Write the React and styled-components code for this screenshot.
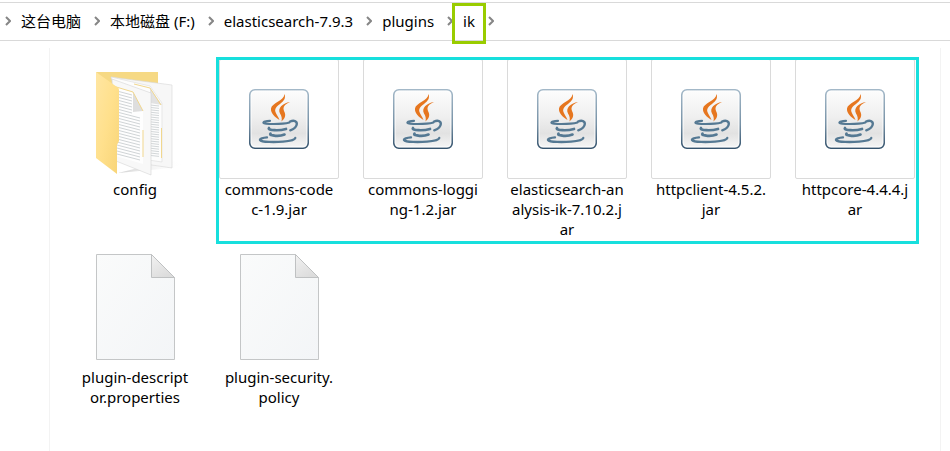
import React from "react";
import styled, { createGlobalStyle } from "styled-components";

const GlobalStyle = createGlobalStyle`
  * { box-sizing: border-box; }
  body {
    margin: 0;
    background: #fff;
    color: #000;
    font-family: "Noto Sans", "Noto Sans CJK SC", sans-serif;
    font-size: 15px;
  }
  button {
    font: inherit;
    color: inherit;
    background: none;
    border: 0;
    padding: 0;
    cursor: default;
  }
`;

const Explorer = styled.div`
  display: flex;
  flex-direction: column;
  min-height: 100vh;
  padding-top: 2px;
`;

const AddressBar = styled.nav`
  height: 39px;
  border-top: 1px solid #d9d9d9;
  border-bottom: 1px solid #d9d9d9;
`;

const Crumbs = styled.ol`
  list-style: none;
  display: flex;
  align-items: center;
  gap: 13px;
  height: 100%;
  margin: 0;
  padding: 0 5px 2px;
`;

const Crumb = styled.li`
  display: flex;
  align-items: center;
  gap: 10px;
`;

const CrumbButton = styled.button`
  position: relative;
  line-height: 20px;
  white-space: nowrap;
`;

const CrumbMark = styled.span`
  position: absolute;
  inset: -8px -11px -13px -11px;
  border: 3px solid #99cc00;
`;

const Arrow = styled.svg`
  display: block;
  width: 6px;
  height: 10px;
  fill: none;
  stroke: #868686;
  stroke-width: 2;
`;

const Pane = styled.main`
  flex: 1;
  margin: 7px 9px 0 49px;
  padding: 11px 0 0 25px;
  border: solid #f3f3f3;
  border-width: 0 1px;
`;

const Files = styled.ul`
  position: relative;
  list-style: none;
  display: grid;
  grid-template-columns: repeat(auto-fill, 120px);
  gap: 8px 24px;
  margin: 0;
  padding: 0;
`;

const Selection = styled.li`
  position: absolute;
  grid-area: 1 / 2 / 2 / 7;
  inset: -2px -4px -5px -3px;
  border: 3px solid #17dfdd;
  pointer-events: none;
`;

const FileButton = styled.button`
  display: block;
  width: 100%;
`;

const Thumb = styled.span`
  display: flex;
  align-items: center;
  justify-content: center;
  height: 120px;
  border: 1px solid ${(p) => (p.$framed ? "#dadada" : "transparent")};
  border-radius: 2px;
`;

const Drawing = styled.svg`
  display: block;
  overflow: visible;
`;

const FileName = styled.span`
  display: block;
  line-height: 20px;
  white-space: pre;
  text-align: center;
`;

const Chevron = () => (
  <Arrow viewBox="0 0 6 10" aria-hidden="true">
    <path d="M1 1l4 4-4 4" />
  </Arrow>
);

const JavaIcon = () => (
  <Drawing width="60" height="60" viewBox="0 0 60 60" aria-hidden="true">
    <defs>
      <linearGradient id="tile" x1="0" y1="0" x2="0" y2="1">
        <stop offset="0" stopColor="#fdfdfd" />
        <stop offset="0.45" stopColor="#f0f0f0" />
        <stop offset="0.75" stopColor="#e2e2e2" />
        <stop offset="1" stopColor="#f6f6f6" />
      </linearGradient>
      <linearGradient id="tileEdge" x1="0" y1="0" x2="0" y2="1">
        <stop offset="0" stopColor="#a3b8c8" />
        <stop offset="0.6" stopColor="#7590a5" />
        <stop offset="1" stopColor="#35536d" />
      </linearGradient>
    </defs>
    <rect x="0.8" y="0.8" width="58.4" height="58.4" rx="5" fill="url(#tile)" stroke="url(#tileEdge)" strokeWidth="1.6" />
    <rect x="2.2" y="2.2" width="55.6" height="55.6" rx="4" fill="none" stroke="#fff" strokeOpacity="0.7" />
    <g fill="#e6761f">
      <path d="M35.500 5c1.500 4-.5 7-4.500 10-4 3-5.500 5-4.500 8 .7 2.500 3 4.500 4 8-5-3-9-7-8.500-11.500C22.500 14 35 12 35.500 5z" />
      <path d="M41 13c-4.500 2-6.500 4-6.500 6.500 0 3 2.500 4.500 1.500 8-.5 2-2 3.500-3.500 5 .8-3.500 0-5.500-1.500-8-3-5.500 3-10.500 10-11.500z" />
    </g>
    <g fill="none" stroke="#557993" strokeLinecap="round">
      <path d="M21 31.800c-4 .3-7 1.200-6.500 2 1 1.500 18 1.800 26-.3" strokeWidth="2.200" />
      <path d="M41 32.500c4-1.500 7-.5 6.800 2.500-.2 2.800-3 5-6.500 6.300" strokeWidth="2.400" />
      <path d="M20 39c-1 1.300 1.500 2 5.500 2.200 4 .2 8-.2 11.500-1.200" strokeWidth="2.700" />
      <path d="M21.500 44.600c-1 1.300 1.500 2 5 2.200 3 .2 6.500-.2 9-1.200" strokeWidth="2.700" />
      <path d="M18 48.300c-4 .3-7.500 1.500-7 2.700 1.500 2.300 15 2.300 23 1.600 6-.5 12-1.800 12.300-3.600" strokeWidth="2.300" />
    </g>
  </Drawing>
);

const DocumentIcon = () => (
  <Drawing width="78" height="108" viewBox="0 0 78 108" aria-hidden="true">
    <defs>
      <linearGradient id="sheet" x1="0" y1="0" x2="1" y2="1">
        <stop offset="0" stopColor="#fafbfb" />
        <stop offset="1" stopColor="#f3f5f7" />
      </linearGradient>
      <linearGradient id="fold" x1="0" y1="0" x2="0.6" y2="1">
        <stop offset="0" stopColor="#f2f2f2" />
        <stop offset="1" stopColor="#dcdcdc" />
      </linearGradient>
    </defs>
    <path d="M.5 1.500h55l23 23v82H.5z" fill="url(#sheet)" stroke="#c4c6c7" />
    <path d="M55.500 1.500v23h23z" fill="url(#fold)" stroke="#bfc1c2" />
  </Drawing>
);

const textRows = Array.from({ length: 22 }, (_, i) => i);

const FolderIcon = () => (
  <Drawing width="78" height="98" viewBox="0 0 78 98" aria-hidden="true">
    <defs>
      <linearGradient id="cover" x1="0" y1="0" x2="1" y2="1">
        <stop offset="0" stopColor="#ffe6a2" />
        <stop offset="0.5" stopColor="#ffe08c" />
        <stop offset="1" stopColor="#f8d477" />
      </linearGradient>
      <linearGradient id="shade" x1="0" y1="0" x2="1" y2="0">
        <stop offset="0" stopColor="#cfcfcf" />
        <stop offset="1" stopColor="#fff" stopOpacity="0" />
      </linearGradient>
    </defs>
    <path d="M74 90l14 4-12 4-22 2-32 3z" fill="url(#shade)" />
    <path d="M0 2h62v75H22z" fill="#f6d984" />
    <path d="M15 7l61 8v83l-27-4z" fill="#f7f7f7" stroke="#d7d7d7" strokeWidth="0.600" />
    <path d="M15 7l39 9 12 17v59l-20-3z" fill="#fdfdfd" stroke="#dcdcdc" strokeWidth="0.600" />
    <g stroke="#d3d7d9" strokeWidth="1">
      {textRows.map((i) => (
        <path key={i} d={`M54 ${35 + i * 2.4}l9 1`} />
      ))}
    </g>
    <path d="M54 18v15l12 2z" fill="#e2e2e2" />
    <path d="M38 14l16 4 11 17M65.500 58v30" fill="none" stroke="#f1d78e" />
    <path d="M16 9l39 14v82L20 91z" fill="#f8f8f8" stroke="#d5d5d5" strokeWidth="0.600" />
    <path d="M17 16l20 6 10 20v52l-27-8z" fill="#fefefe" />
    <g stroke="#d0d4d6" strokeWidth="1">
      {textRows.map((i) => (
        <path key={i} d={`M21 ${21 + i * 3}L${i < 7 ? 36 : 44} ${(i < 7 ? 25 : 27) + i * 3}`} />
      ))}
    </g>
    <path d="M37 22v20l10-1z" fill="#dedede" />
    <path d="M17 16l20 6 10 19M47 60v27" fill="none" stroke="#f1d78e" />
    <path d="M0 2l21 15c2 1 2 2 2 4v50l-2 4v29L0 88z" fill="url(#cover)" />
  </Drawing>
);

const icons = { folder: FolderIcon, jar: JavaIcon, document: DocumentIcon };

const path = ["这台电脑", "本地磁盘 (F:)", "elasticsearch-7.9.3", "plugins", "ik"];

const files = [
  { kind: "folder", name: "config" },
  { kind: "jar", name: "commons-code\nc-1.9.jar" },
  { kind: "jar", name: "commons-loggi\nng-1.2.jar" },
  { kind: "jar", name: "elasticsearch-an\nalysis-ik-7.10.2.j\nar" },
  { kind: "jar", name: "httpclient-4.5.2.\njar" },
  { kind: "jar", name: "httpcore-4.4.4.j\nar" },
  { kind: "document", name: "plugin-descript\nor.properties" },
  { kind: "document", name: "plugin-security.\npolicy" },
];

const FileItem = ({ kind, name }) => {
  const Icon = icons[kind];
  return (
    <li>
      <FileButton type="button">
        <Thumb $framed={kind === "jar"}>
          <Icon />
        </Thumb>
        <FileName>{name}</FileName>
      </FileButton>
    </li>
  );
};

export default function App() {
  return (
    <Explorer>
      <GlobalStyle />
      <AddressBar aria-label="Address">
        <Crumbs>
          {path.map((label, i) => (
            <Crumb key={label}>
              <Chevron />
              <CrumbButton type="button">
                {label}
                {i === path.length - 1 && <CrumbMark />}
              </CrumbButton>
            </Crumb>
          ))}
          <li>
            <Chevron />
          </li>
        </Crumbs>
      </AddressBar>
      <Pane>
        <Files>
          {files.map((file) => (
            <FileItem key={file.name} {...file} />
          ))}
          <Selection aria-hidden="true" />
        </Files>
      </Pane>
    </Explorer>
  );
}
